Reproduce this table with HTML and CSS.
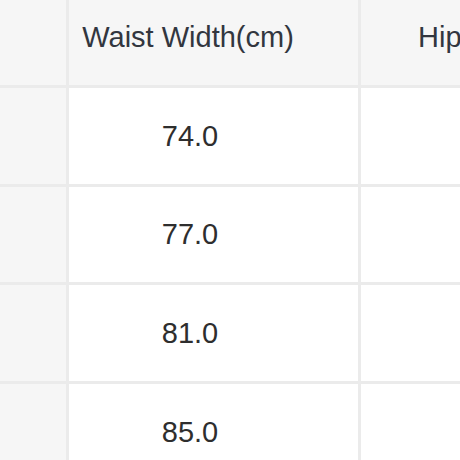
FILE: index.html
```html
<!DOCTYPE html>
<html>
<head>
<meta charset="utf-8">
<link rel="stylesheet" href="styles.css">
</head>
<body>
<div class="table">
  <div class="cell head side"></div>
  <div class="cell head mid">Waist Width(cm)</div>
  <div class="cell head right">Hip Width(cm)</div>

  <div class="cell side"></div>
  <div class="cell mid">74.0</div>
  <div class="cell right"></div>

  <div class="cell side"></div>
  <div class="cell mid">77.0</div>
  <div class="cell right"></div>

  <div class="cell side"></div>
  <div class="cell mid">81.0</div>
  <div class="cell right"></div>

  <div class="cell side"></div>
  <div class="cell mid">85.0</div>
  <div class="cell right"></div>
</div>
</body>
</html>
```

FILE: styles.css
```css
html, body {
  margin: 0;
  padding: 0;
  background: #ffffff;
  overflow: hidden;
}
body {
  width: 460px;
  height: 460px;
}
.table {
  display: grid;
  grid-template-columns: 66px 289px 300px;
  grid-template-rows: 96px 96px 95px 96px 96px;
  gap: 3px;
  background: #ebebeb;
  margin-top: -11px;
  width: 661px;
  font-family: "Liberation Sans", Arial, sans-serif;
  font-size: 29px;
  color: #2e2e2e;
}
.cell {
  background: #ffffff;
  display: flex;
  align-items: center;
  white-space: nowrap;
  overflow: hidden;
}
.cell.head,
.cell.side {
  background: #f6f6f6;
}
.cell.head {
  color: #32363f;
}
.cell.mid {
  justify-content: center;
  padding-right: 47px;
}
.cell.head.mid {
  padding-right: 51px;
}
.cell.right {
  padding-left: 57px;
}
```
